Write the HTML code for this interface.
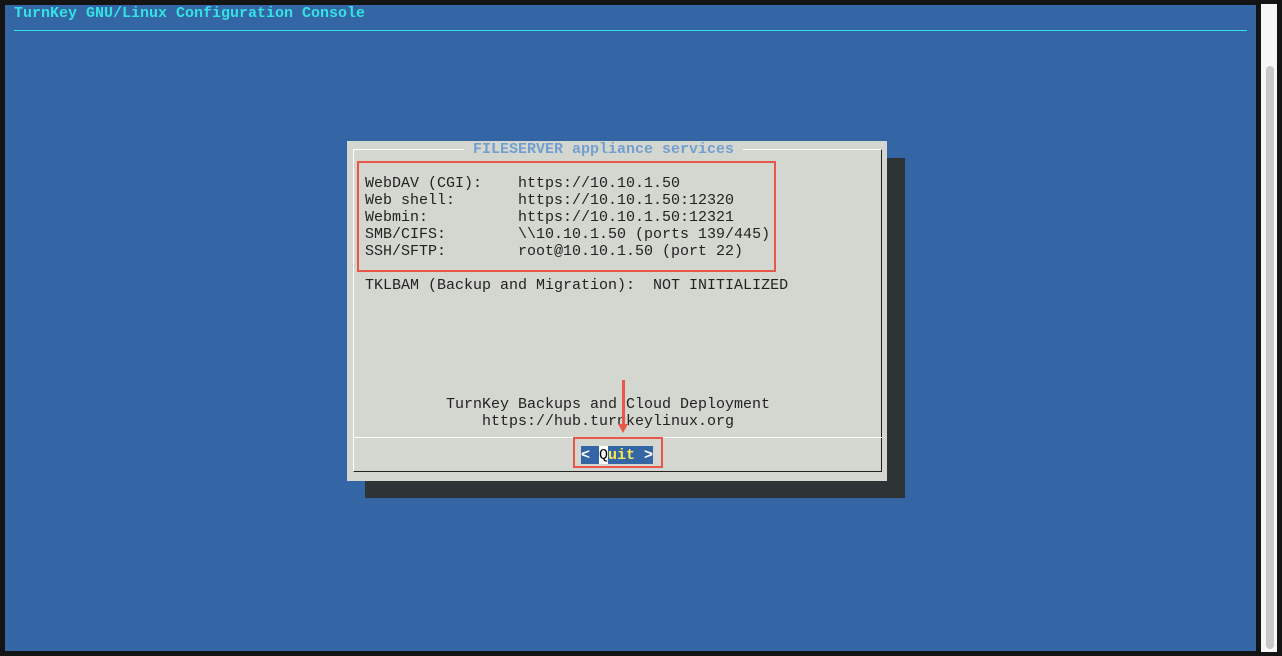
<!DOCTYPE html>
<html><head><meta charset="utf-8"><style>
*{margin:0;padding:0;box-sizing:border-box}
body{width:1282px;height:656px;background:#141414;position:relative;overflow:hidden;font-family:"Liberation Mono",monospace;font-size:15px}
.a{position:absolute;white-space:pre;line-height:17px}
</style></head><body>
<div class="a" style="left:5px;top:5px;width:1251px;height:646px;background:#3465a4"></div>
<div class="a" style="left:1261px;top:4px;width:16px;height:648px;background:#f7f7f7"></div>
<div class="a" style="left:1266px;top:66px;width:8px;height:583px;background:#c8c8c8;border-radius:4px"></div>
<div class="a" style="left:14px;top:5px;color:#34e2e2;font-weight:bold;font-size:15px">TurnKey GNU/Linux Configuration Console</div>
<div class="a" style="left:14px;top:30px;width:1233px;height:1px;background:#34e2e2"></div>

<div class="a" style="left:365px;top:158px;width:540px;height:340px;background:#2e3436"></div>
<div class="a" style="left:347px;top:141px;width:540px;height:340px;background:#d3d7cf"></div>
<div class="a" style="left:353px;top:149px;width:529px;height:323px;border:1px solid #fff;border-right-color:#222;border-bottom-color:#222"></div>
<div class="a" style="left:353px;top:437px;width:529px;height:1px;background:#fff"></div>
<div class="a" style="left:464px;top:141px;background:#d3d7cf;color:#729fcf;font-weight:bold;padding:0 0px"> FILESERVER appliance services </div>

<div class="a" style="left:365px;top:175px;color:#222">WebDAV (CGI):    https://10.10.1.50
Web shell:       https://10.10.1.50:12320
Webmin:          https://10.10.1.50:12321
SMB/CIFS:        \\10.10.1.50 (ports 139/445)
SSH/SFTP:        root@10.10.1.50 (port 22)

TKLBAM (Backup and Migration):  NOT INITIALIZED</div>
<div class="a" style="left:446px;top:396px;color:#222">TurnKey Backups and Cloud Deployment</div>
<div class="a" style="left:482px;top:413px;color:#222">https://hub.turnkeylinux.org</div>

<div class="a" style="left:581px;top:446px;width:72px;height:18px;background:#3465a4"></div>
<div class="a" style="left:599px;top:446px;width:9px;height:18px;background:#fff"></div>
<div class="a" style="left:581px;top:447px;font-weight:bold;color:#fff">< <span style="color:#000;font-weight:normal">Q</span><span style="color:#fce94f">uit</span> ></div>

<div class="a" style="left:357px;top:161px;width:419px;height:111px;border:2px solid #e8584a"></div>
<div class="a" style="left:573px;top:437px;width:90px;height:31px;border:2px solid #e8584a"></div>
<div class="a" style="left:622px;top:380px;width:3px;height:46px;background:#e8584a"></div>
<div class="a" style="left:618px;top:424px;width:0;height:0;border-left:5px solid transparent;border-right:5px solid transparent;border-top:9px solid #e8584a"></div>
</body></html>
